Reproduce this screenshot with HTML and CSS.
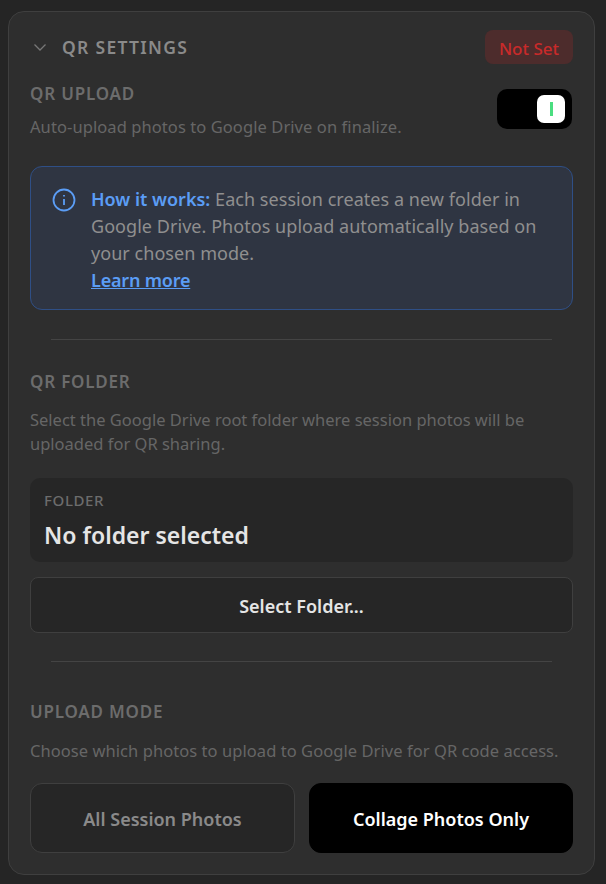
FILE: index.html
```html
<!DOCTYPE html>
<html>
<head>
    <meta charset="utf-8" />
    <title>QR Settings</title>
    <link rel="stylesheet" href="styles.css">
</head>
<body class="body">
    <div class="card">
        <div class="header">
            <div class="headerLeft">
                <svg class="chevron" width="16" height="16" viewBox="0 0 16 16"><path d="M2.5 5.5 8 11l5.500-5.500" fill="none" stroke="#777" stroke-width="1.300"/></svg>
                <span class="title">QR SETTINGS</span>
            </div>
            <span class="badge">Not Set</span>
        </div>

        <div class="uploadRow">
            <div>
                <div class="label">QR UPLOAD</div>
                <div class="desc uploadDesc">Auto-upload photos to Google Drive on finalize.</div>
            </div>
            <div class="toggle"><div class="knob"><div class="knobMark"></div></div></div>
        </div>

        <div class="info">
            <svg class="infoIcon" width="24" height="24" viewBox="0 0 24 24" fill="none" stroke="#5b9df5" stroke-width="1.800">
                <circle cx="12" cy="12" r="10.500"/>
                <path d="M12 11v6"/>
                <path d="M12 7v1.500"/>
            </svg>
            <div class="infoText">
                <b class="infoStrong">How it works:</b> Each session creates a new folder in Google Drive. Photos upload automatically based on your chosen mode.<br />
                <a class="infoLink" href="#">Learn more</a>
            </div>
        </div>

        <hr class="divider" />

        <div class="label folderLabel">QR FOLDER</div>
        <div class="desc folderDesc">Select the Google Drive root folder where session photos will be uploaded for QR sharing.</div>

        <div class="folderBox">
            <div class="folderCaption">FOLDER</div>
            <div class="folderValue">No folder selected</div>
        </div>
        <button class="selectBtn">Select Folder...</button>

        <hr class="divider secondDivider" />

        <div class="label modeLabel">UPLOAD MODE</div>
        <div class="desc modeDesc">Choose which photos to upload to Google Drive for QR code access.</div>

        <div class="modes">
            <button class="modeBtn">All Session Photos</button>
            <button class="modeBtn active">Collage Photos Only</button>
        </div>
    </div>
</body>
</html>
```

FILE: styles.css
```css
.body {
    margin: 0;
    background-color: #252525;
    font-family: "Noto Sans", "Open Sans", sans-serif;
    color: #e5e5e5;
}
.card {
    box-sizing: border-box;
    width: 587px;
    height: 864px;
    margin: 11px 0 0 8px;
    padding: 17px 21px 0;
    background-color: #2e2e2e;
    border: 1px solid #3f3f3f;
    border-radius: 16px;
}
.header {
    display: flex;
    justify-content: space-between;
    align-items: center;
    height: 35px;
}
.headerLeft {
    display: flex;
    align-items: center;
    gap: 14px;
    margin-left: 2px;
}
.title {
    font-size: 17.500px;
    font-weight: 600;
    letter-spacing: 1.3px;
    color: #8a8a8a;
}
.badge {
    box-sizing: border-box;
    width: 88px;
    height: 34px;
    line-height: 37px;
    text-align: center;
    font-size: 17px;
    font-weight: 500;
    color: #c92a2a;
    background-color: #4d2c2c;
    border-radius: 8px;
}
.uploadRow {
    display: flex;
    justify-content: space-between;
    align-items: flex-start;
    margin-top: 18px;
}
.label {
    font-size: 17px;
    line-height: 24px;
    font-weight: 600;
    letter-spacing: 0.8px;
    color: #6c6c6c;
}
.desc {
    font-size: 16.500px;
    line-height: 24px;
    color: #666;
}
.uploadDesc {
    margin-top: 9px;
    letter-spacing: 0.08px;
}
.toggle {
    box-sizing: border-box;
    display: flex;
    justify-content: flex-end;
    align-items: center;
    width: 75px;
    height: 40px;
    margin: 7px 1px 0 0;
    padding-right: 7px;
    background-color: #000;
    border-radius: 10px;
}
.knob {
    display: flex;
    justify-content: center;
    align-items: center;
    width: 28px;
    height: 28px;
    background-color: #fff;
    border-radius: 7px;
}
.knobMark {
    width: 3px;
    height: 14px;
    background-color: #4ade80;
}
.info {
    box-sizing: border-box;
    display: flex;
    gap: 15px;
    height: 144px;
    margin-top: 27px;
    padding: 19px 21px;
    background-color: #2f3542;
    border: 1px solid #2f4f86;
    border-radius: 12px;
}
.infoIcon {
    flex: none;
    margin-top: 2px;
}
.infoText {
    font-size: 18px;
    line-height: 27px;
    letter-spacing: 0.05px;
    color: #8f8f8f;
}
.infoStrong {
    font-weight: 600;
    letter-spacing: 0;
    color: #5b9df5;
}
.infoLink {
    font-weight: 600;
    letter-spacing: -0.2px;
    color: #5b9df5;
}
.divider {
    height: 1px;
    margin: 29px 21px 0;
    border: 0;
    background-color: #444;
}
.folderLabel {
    margin-top: 30px;
}
.folderDesc {
    margin-top: 14px;
}
.folderBox {
    box-sizing: border-box;
    height: 84px;
    margin-top: 22px;
    padding: 12px 14px;
    background-color: #262626;
    border-radius: 10px;
}
.folderCaption {
    font-size: 15px;
    line-height: 20px;
    font-weight: 500;
    letter-spacing: 0.6px;
    color: #6c6c6c;
}
.folderValue {
    margin-top: 9px;
    font-size: 23px;
    line-height: 32px;
    font-weight: 600;
    color: #e5e5e5;
}
.selectBtn {
    display: block;
    width: 100%;
    height: 56px;
    margin-top: 15px;
    padding-top: 3px;
    font-family: inherit;
    font-size: 18px;
    font-weight: 600;
    color: #e5e5e5;
    background-color: #262626;
    border: 1px solid #3f3f3f;
    border-radius: 8px;
}
.secondDivider {
    margin-top: 28px;
}
.modeLabel {
    margin-top: 38px;
}
.modeDesc {
    margin-top: 15px;
    letter-spacing: 0.06px;
}
.modes {
    display: grid;
    grid-template-columns: 265px 264px;
    gap: 14px;
    margin-top: 20px;
}
.modeBtn {
    height: 70px;
    padding-top: 3px;
    font-family: inherit;
    font-size: 18px;
    font-weight: 600;
    color: #8a8a8a;
    background-color: #262626;
    border: 1px solid #3f3f3f;
    border-radius: 12px;
}
.active {
    color: #fff;
    background-color: #000;
    border-color: #000;
}
```
